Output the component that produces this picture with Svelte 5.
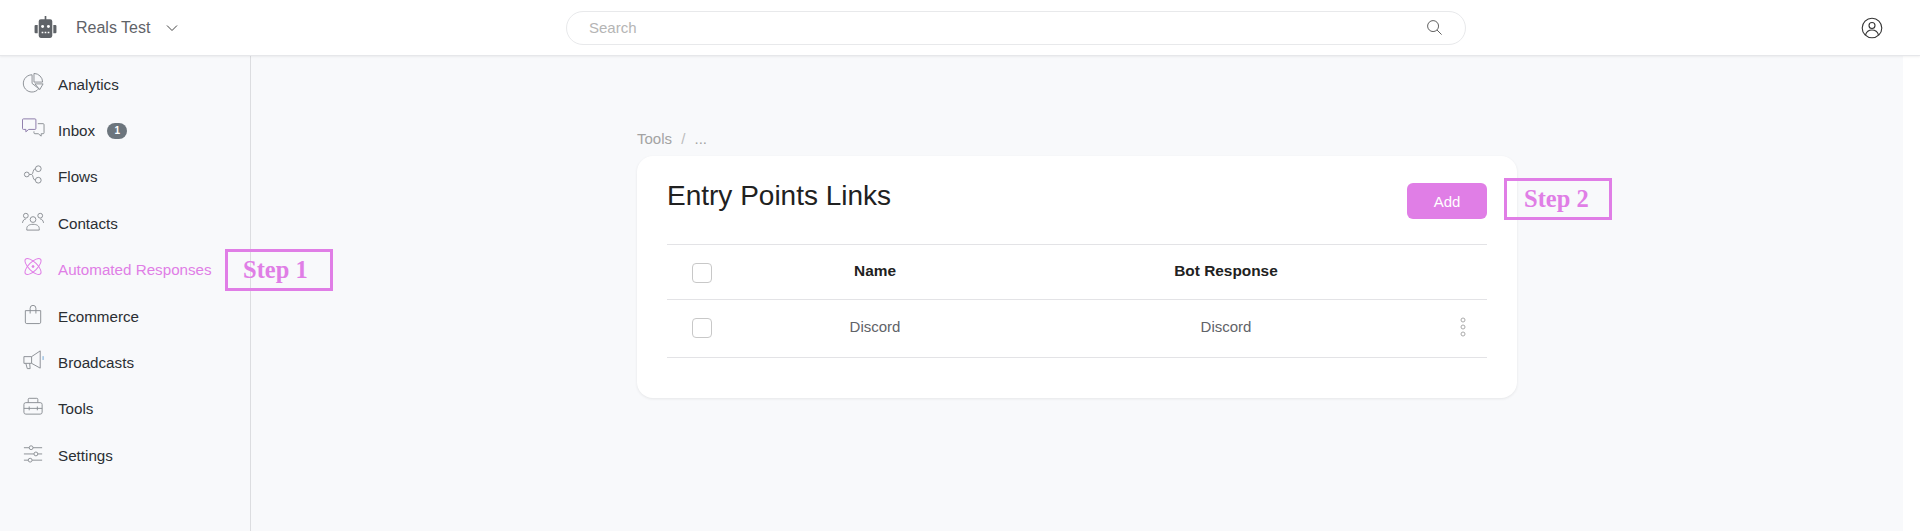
<script>
  const nav = [
    { label: 'Analytics', icon: 'analytics' },
    { label: 'Inbox', icon: 'inbox', badge: 1 },
    { label: 'Flows', icon: 'flows' },
    { label: 'Contacts', icon: 'contacts' },
    { label: 'Automated Responses', icon: 'auto', active: true },
    { label: 'Ecommerce', icon: 'shop' },
    { label: 'Broadcasts', icon: 'cast' },
    { label: 'Tools', icon: 'tools' },
    { label: 'Settings', icon: 'settings' }
  ];
</script>

<div class="page">
  <header class="top">
    <div class="brand">
      <svg class="bot" viewBox="0 0 24 24" width="25" height="25">
        <path fill="#5f6368" d="M11.2 1h1.600v3h-1.600zM5.500 6a2 2 0 0 1 2-2h9a2 2 0 0 1 2 2v14a2 2 0 0 1-2 2h-9a2 2 0 0 1-2-2z"/>
        <path fill="#5f6368" d="M1.500 10.500a1 1 0 0 1 1-1H4.500v8H2.500a1 1 0 0 1-1-1zM19.500 9.500h2a1 1 0 0 1 1 1v6a1 1 0 0 1-1 1h-2z"/>
        <circle cx="9.200" cy="11" r="1.400" fill="#fff"/><circle cx="14.800" cy="11" r="1.400" fill="#fff"/>
        <path fill="#fff" d="M8.300 16h1.600v1.600H8.300zM11.200 16h1.600v1.600h-1.600zM14.100 16h1.600v1.600h-1.600z"/>
      </svg>
      <span class="brand-name">Reals Test</span>
      <svg class="chev" viewBox="0 0 12 8" width="12" height="8"><path d="M1 1.500l5 5 5-5" fill="none" stroke="#444" stroke-width="1"/></svg>
    </div>
    <div class="search">
      <span class="ph">Search</span>
      <svg viewBox="0 0 18 18" width="17" height="17"><circle cx="7.500" cy="7.500" r="5.800" fill="none" stroke="#555" stroke-width="1"/><path d="M11.700 11.700l4.800 4.800" stroke="#555" stroke-width="1"/></svg>
    </div>
    <svg class="user" viewBox="0 0 22 22" width="22" height="22">
      <circle cx="11" cy="11" r="9.800" fill="none" stroke="#333" stroke-width="1.100"/>
      <circle cx="11" cy="8.500" r="3" fill="none" stroke="#333" stroke-width="1.100"/>
      <path d="M4.500 18c1-3.500 3.500-5 6.500-5s5.500 1.500 6.500 5" fill="none" stroke="#333" stroke-width="1.100"/>
    </svg>
  </header>

  <div class="body">
    <aside class="side">
      {#each nav as item}
        <div class="item" class:active={item.active}>
          <span class="ico">
            <svg viewBox="0 0 24 24" width="24" height="24" fill="none" stroke="currentColor" stroke-width="1">
              {#if item.icon === 'analytics'}
                <path d="M10.500 5a9 9 0 1 0 7 14.500l-7-5.500z"/><path d="M12.500 3.600a9 9 0 0 1 9 9h-9z"/><path d="M13.500 14.500H22l-3.500 6z"/>
              {:else if item.icon === 'inbox'}
                <path d="M1.500 3h12a1 1 0 0 1 1 1v9a1 1 0 0 1-1 1H7l-3 2.500V14H1.500a1 1 0 0 1-1-1V4a1 1 0 0 1 1-1z" stroke="#8a78a8"/><path d="M16.500 8H22a1 1 0 0 1 1 1v8.500a1 1 0 0 1-1 1h-2v2.500l-3-2.500h-3.500a1 1 0 0 1-1-1V16"/>
              {:else if item.icon === 'flows'}
                <circle cx="5" cy="13" r="2.500"/><circle cx="17" cy="7" r="3"/><circle cx="17" cy="19" r="3"/><path d="M7.500 13H10c2 0 1-6 4-6M10 13c2 0 1 6 4 6"/>
              {:else if item.icon === 'contacts'}
                <circle cx="11.500" cy="11" r="3"/><circle cx="4" cy="7" r="2.500"/><circle cx="19" cy="7" r="2.500"/><path d="M5 22v-1.500c0-3 2.500-4.500 6.500-4.500s6.500 1.500 6.500 4.500V22z"/><path d="M.5 14.500c.5-3 2-4 3.500-4M22.500 14.500c-.5-3-2-4-3.500-4"/>
              {:else if item.icon === 'auto'}
                <ellipse cx="11.500" cy="12" rx="11" ry="4.500" transform="rotate(45 11.500 12)"/><ellipse cx="11.500" cy="12" rx="11" ry="4.500" transform="rotate(-45 11.500 12)"/><circle cx="11.500" cy="12" r="1" fill="currentColor"/>
              {:else if item.icon === 'shop'}
                <path d="M3.500 9h16v12a1.500 1.500 0 0 1-1.500 1.500H5A1.500 1.500 0 0 1 3.500 21z"/><path d="M8.500 12V6.500a3 3 0 0 1 6 0V12"/>
              {:else if item.icon === 'cast'}
                <path d="M2 9h8v7H2z"/><path d="M10 9l9-6v18l-9-5"/><path d="M4 16l1.500 5.500h3L8 16"/><path d="M22 8.500v4" stroke="#6fa8d8"/>
              {:else if item.icon === 'tools'}
                <rect x="2" y="9" width="19" height="12" rx="2"/><path d="M6.500 9V5.500a1 1 0 0 1 1-1h8a1 1 0 0 1 1 1V9M2 15h19M7.500 13v4M16 13v4"/>
              {:else}
                <path d="M2 7h5.500M11.500 7H21M2 13.500h10.500M16.500 13.500H21M2 20h4.500M10.500 20H21"/><circle cx="9.500" cy="7" r="2"/><circle cx="14.500" cy="13.500" r="2"/><circle cx="8.500" cy="20" r="2"/>
              {/if}
            </svg>
          </span>
          <span>{item.label}</span>
          {#if item.badge}<span class="badge">{item.badge}</span>{/if}
        </div>
      {/each}
    </aside>

    <main class="main">
      <div class="wrap">
        <div class="crumb">Tools <span class="sep">/</span> ...</div>
        <section class="card">
          <div class="head">
            <h1>Entry Points Links</h1>
            <button class="add">Add</button>
          </div>
          <div class="row th">
            <span class="box"></span><span>Name</span><span>Bot Response</span><span></span>
          </div>
          <div class="row td">
            <span class="box"></span><span>Discord</span><span>Discord</span>
            <svg class="more" viewBox="0 0 6 20" width="6" height="20" fill="none" stroke="#aaa" stroke-width="1"><circle cx="3" cy="3" r="2"/><circle cx="3" cy="10" r="2"/><circle cx="3" cy="17" r="2"/></svg>
          </div>
        </section>
      </div>
    </main>
    <div class="track"></div>
  </div>

  <div class="step s1">Step 1</div>
  <div class="step s2">Step 2</div>
</div>

<style>
  :global(body) { margin: 0; background: #f8f9fb; }
  .page { position: relative; height: 531px; overflow: hidden; font-family: "Liberation Sans", Arial, sans-serif; color: #212529; }
  .top { height: 55px; background: #fff; border-bottom: 1px solid #e6e7ea; box-shadow: 0 1px 2px rgba(0,0,0,.06); display: grid; grid-template-columns: 566px 900px 1fr; align-items: center; position: relative; z-index: 1; }
  .brand { display: flex; align-items: center; padding-left: 33px; }
  .brand-name { margin-left: 18px; font-size: 16px; color: #5f6368; }
  .chev { margin-left: 16px; }
  .search { border: 1px solid #e8e9eb; border-radius: 17px; box-sizing: border-box; height: 34px; display: flex; align-items: center; justify-content: space-between; padding: 0 22px 0 22px; background: #fff; }
  .ph { font-size: 15px; color: #b5b5b5; }
  .user { justify-self: end; margin-right: 37px; }
  .body { display: flex; height: 476px; }
  .side { width: 250px; flex: none; border-right: 1px solid #dcdde0; padding-top: 5px; }
  .item { height: 46.4px; display: flex; align-items: center; font-size: 15.200px; color: #2b2f33; padding-left: 22px; }
  .item .ico { width: 36px; flex: none; color: #8b8f94; display: flex; margin-top: -6px; }
  .item .ico svg { width: 23px; height: 23px; }
  .item.active, .item.active .ico { color: #e07ee6; }
  .badge { margin-left: 12px; width: 20px; height: 16px; border-radius: 8px; background: #6c757d; color: #fff; font-size: 10px; font-weight: 700; display: flex; align-items: center; justify-content: center; }
  .main { flex: 1; display: flex; justify-content: flex-start; padding-left: 386px; }
  .wrap { width: 880px; padding-top: 73px; }
  .crumb { font-size: 15px; color: #a3a3a3; line-height: 20px; margin-bottom: 7px; }
  .sep { margin: 0 5px; color: #bdbdbd; }
  .card { background: #fff; border-radius: 16px; box-shadow: 0 1px 3px rgba(0,0,0,.08); height: 242px; padding: 0 30px; box-sizing: border-box; }
  .head { height: 88px; border-bottom: 1px solid #e3e3e6; display: flex; justify-content: space-between; }
  h1 { margin: 24px 0 0; font-size: 28px; font-weight: 400; line-height: 32px; color: #212121; }
  .add { width: 80px; height: 36px; margin-top: 27px; border: 0; border-radius: 6px; background: #e07ee6; color: #fff; font: 15px "Liberation Sans", Arial, sans-serif; }
  .row { display: grid; grid-template-columns: 52px 312px 390px 66px; align-items: center; border-bottom: 1px solid #e3e3e6; text-align: center; box-sizing: border-box; }
  .th { height: 55px; font-size: 15.400px; font-weight: 700; color: #212121; padding-bottom: 2px; }
  .td { height: 58px; font-size: 15px; color: #5f6368; padding-bottom: 4px; }
  .box { width: 20px; height: 20px; box-sizing: border-box; margin-left: 25px; margin-top: 3px; border: 1px solid #c8c8c8; border-radius: 4px; background: #fff; }
  .more { justify-self: end; margin-right: 21px; }
  .track { width: 17px; flex: none; background: #fff; }
  .step { position: absolute; box-sizing: border-box; border: 3px solid #e07ee6; color: #e07ee6; font: 700 24.500px "Liberation Serif", serif; height: 42px; width: 108px; display: flex; align-items: center; padding-left: 15px; }
  .s1 { left: 225px; top: 249px; }
  .s2 { left: 1504px; top: 178px; padding-left: 17px; }
</style>
